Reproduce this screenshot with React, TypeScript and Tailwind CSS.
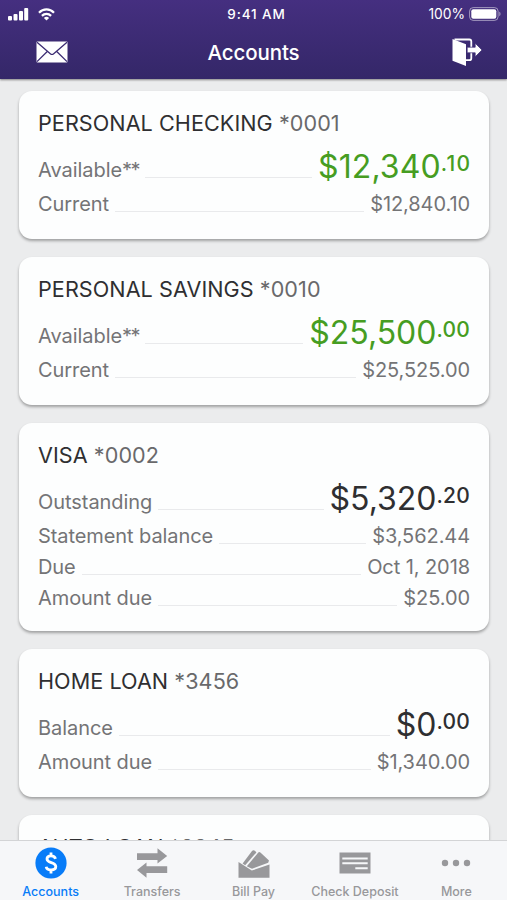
import type { ReactNode } from "react";

interface Row {
  label: string;
  value: string;
}

interface Account {
  name: string;
  mask: string;
  label: string;
  footnote?: string;
  dollars: string;
  cents: string;
  positive?: boolean;
  rows: Row[];
}

const accounts: Account[] = [
  {
    name: "PERSONAL CHECKING",
    mask: "*0001",
    label: "Available",
    footnote: "**",
    dollars: "$12,340",
    cents: ".10",
    positive: true,
    rows: [{ label: "Current", value: "$12,840.10" }],
  },
  {
    name: "PERSONAL SAVINGS",
    mask: "*0010",
    label: "Available",
    footnote: "**",
    dollars: "$25,500",
    cents: ".00",
    positive: true,
    rows: [{ label: "Current", value: "$25,525.00" }],
  },
  {
    name: "VISA",
    mask: "*0002",
    label: "Outstanding",
    dollars: "$5,320",
    cents: ".20",
    rows: [
      { label: "Statement balance", value: "$3,562.44" },
      { label: "Due", value: "Oct 1, 2018" },
      { label: "Amount due", value: "$25.00" },
    ],
  },
  {
    name: "HOME LOAN",
    mask: "*3456",
    label: "Balance",
    dollars: "$0",
    cents: ".00",
    rows: [{ label: "Amount due", value: "$1,340.00" }],
  },
  {
    name: "AUTO LOAN",
    mask: "*2345",
    label: "Balance",
    dollars: "$0",
    cents: ".00",
    rows: [{ label: "Amount due", value: "$0.00" }],
  },
];

function StatusBar() {
  return (
    <div className="h-[28px] pl-[8px] pr-[6px] grid grid-cols-3 items-center text-[13.8px]">
      <div className="flex items-center gap-[9px]">
        <svg width="21" height="14" viewBox="0 0 21 14" fill="white">
          <rect x="0" y="9" width="4" height="4.5" rx="1" />
          <rect x="5.5" y="7" width="4" height="6.5" rx="1" />
          <rect x="11" y="4" width="4" height="9.5" rx="1" />
          <rect x="16.2" y="1" width="4" height="12.5" rx="1" />
        </svg>
        <svg width="17" height="13" viewBox="0 0 17 13" fill="none" stroke="white" strokeWidth="2.2">
          <path d="M1 4.7C5.2 .3 11.8 .3 16 4.7" />
          <path d="M3.9 7.9C6.6 5.2 10.4 5.2 13.1 7.9" />
          <path d="M5.9 9.9C7.4 8.4 9.6 8.4 11.1 9.9L8.5 12.6Z" fill="white" stroke="none" />
        </svg>
      </div>
      <div className="text-center font-medium tracking-[0.9px] text-[13.5px] pl-[4px]">9:41 AM</div>
      <div className="flex items-center justify-end gap-[4px]">
        <span>100%</span>
        <svg width="32" height="14" viewBox="0 0 32 14" fill="none">
          <rect x="0.6" y="0.6" width="28.5" height="12.8" rx="3.6" stroke="white" strokeOpacity="0.5" />
          <rect x="2.3" y="2.2" width="25" height="9.6" rx="2" fill="white" />
          <path d="M30.4 4.8C31.8 5.3 31.8 8.7 30.4 9.2Z" fill="white" fillOpacity="0.6" />
        </svg>
      </div>
    </div>
  );
}

function Header() {
  return (
    <header className="relative z-10 shrink-0 h-[79px] text-white bg-linear-to-b from-[#452f80] to-[#342768] shadow-[0_1px_2px_rgba(0,0,0,0.45)]">
      <StatusBar />
      <div className="h-[48px] pl-[36px] pr-[25px] grid grid-cols-[1fr_auto_1fr] items-center">
        <svg width="32" height="22" viewBox="0 0 32 22">
          <rect x="0.5" y="0.5" width="31" height="21" rx="1" fill="white" />
          <path
            d="M1 1.3L14.6 12.9Q16 14 17.4 12.9L31 1.3M1 20.6L11.5 10.3M31 20.6L20.5 10.3"
            fill="none"
            stroke="#3b2b72"
            strokeWidth="1.3"
          />
        </svg>
        <h1 className="text-[20.5px] font-medium tracking-[-0.1px] pt-[2px] pr-[11px]">Accounts</h1>
        <svg className="justify-self-end" width="30" height="29" viewBox="0 0 30 29">
          <path d="M2.5 1.5H17.3Q19.3 1.5 19.3 3.5V20.2Q19.3 22.2 17.3 22.2H14" fill="none" stroke="white" strokeWidth="1.8" />
          <path d="M0.5 1L14 6.2V28L0.5 22.8Z" fill="white" />
          <path d="M15.2 9.2H23.2V5.2L30 12L23.2 18.8V14.8H15.2Z" fill="white" stroke="#3b2b72" strokeWidth="0.7" />
        </svg>
      </div>
    </header>
  );
}

function AccountCard({ account }: { account: Account }) {
  // the 1 glyph is narrow, open the tracking a little where it is used
  const dollarTracking = account.dollars.startsWith("$1") ? "tracking-[0.1px]" : "";
  const centTracking = account.cents.startsWith(".1") ? "tracking-[1.2px] -mr-[1.2px]" : "tracking-[0.2px]";

  return (
    <section
      className={`shrink-0 bg-[#fdfefe] rounded-[13px] px-[19px] pt-[18px] shadow-[0_2px_3px_rgba(0,0,0,0.32)] ${
        account.rows.length > 1 ? "pb-[17px]" : "pb-[19px]"
      }`}
    >
      <h2 className="text-[21.6px] leading-[28px] tracking-[0.06px] text-[#2f2f31]">
        {account.name} <span className="text-[#69696b]">{account.mask}</span>
      </h2>
      <div className="mt-[11px] h-[41px] flex items-end">
        <span className="text-[20px] leading-[37px] tracking-[-0.05px] text-[#747476]">
          {account.label}
          {account.footnote && <span className="tracking-[-1.6px]">{account.footnote}</span>}
        </span>
        <div className="flex-1 mx-[6px] mb-[11px] h-px bg-[#e9eaec]" />
        <span className={`flex items-start leading-[44px] ${account.positive ? "text-[#469d22]" : "text-[#2f2f31]"}`}>
          <span className={`text-[32px] ${dollarTracking}`}>{account.dollars}</span>
          <span className={`text-[21px] leading-[37px] font-medium ${centTracking}`}>{account.cents}</span>
        </span>
      </div>
      {account.rows.map((row) => (
        <div key={row.label} className="h-[31px] flex items-end text-[20px] leading-[31px] tracking-[-0.08px] text-[#747476]">
          <span>{row.label}</span>
          <div className="flex-1 mx-[6px] mb-[8px] h-px bg-[#e9eaec]" />
          <span>{row.value}</span>
        </div>
      ))}
    </section>
  );
}

function Tab({ label, active, children }: { label: string; active?: boolean; children: ReactNode }) {
  return (
    <button className={`flex-1 basis-0 min-w-0 flex flex-col items-center ${active ? "text-[#087cf8]" : "text-[#98989b]"}`}>
      <span className="h-[44px] flex items-center justify-center">{children}</span>
      <span className="text-[12.5px] leading-[14px] font-medium whitespace-nowrap">{label}</span>
    </button>
  );
}

function TabBar() {
  return (
    <nav className="relative z-10 shrink-0 h-[60px] flex bg-[#f6f7f9] border-t border-[#d3d4d6]">
      <Tab label="Accounts" active>
        <svg width="32" height="32" viewBox="0 0 32 32">
          <circle cx="16" cy="16" r="15.6" fill="currentColor" />
          <path
            d="M20.5 11.8C19.5 7.8 12 7.8 12 12C12 16.6 20.8 14.6 20.8 19.6C20.8 24 12 24.2 11.2 19.8M16 5.6V9M16 23V26.4"
            fill="none"
            stroke="white"
            strokeWidth="2.8"
          />
        </svg>
      </Tab>
      <Tab label="Transfers">
        <svg width="32" height="30" viewBox="0 0 32 30" fill="currentColor">
          <path d="M1 5.3H21.5V.3L31.2 8L21.5 15.5V12H1Z" />
          <path d="M31.2 18.3H10.5V14.5L1 22L10.5 29.7V25H31.2Z" />
        </svg>
      </Tab>
      <Tab label="Bill Pay">
        <svg width="32" height="30" viewBox="0 0 32 30" fill="currentColor">
          <path d="M.5 14L13.8 22.6L31.5 16.4V29.7H.5Z" />
          <path d="M4.6 15.4L14 2.9Q15.4 1.6 17.2 3L18.4 4.4L7.2 17.3Z" />
          <path d="M8.8 18.3L20.3 4.6Q21.3 3.6 22.4 4.6L31 12.4L30.2 14.8L14 20.8Z" />
        </svg>
      </Tab>
      <Tab label="Check Deposit">
        <svg width="32" height="22" viewBox="0 0 32 22">
          <rect x="0.5" y="0.5" width="31" height="21" fill="currentColor" />
          <path d="M3.3 6.5H28.7M3.3 11.3H28.7M16.3 16.2H28.7" stroke="#f6f7f9" strokeWidth="1.9" />
        </svg>
      </Tab>
      <Tab label="More">
        <svg width="30" height="8" viewBox="0 0 30 8" fill="currentColor">
          <circle cx="4" cy="4" r="3.2" />
          <circle cx="15" cy="4" r="3.2" />
          <circle cx="26" cy="4" r="3.2" />
        </svg>
      </Tab>
    </nav>
  );
}

export default function App() {
  return (
    <div className="w-full h-screen overflow-hidden flex flex-col bg-[#ebeced] font-[Inter,sans-serif]">
      <Header />
      <main className="flex-1 min-h-0 overflow-hidden pl-[19px] pr-[18px] pt-[12px] flex flex-col gap-[18px]">
        {accounts.map((account) => (
          <AccountCard key={account.name} account={account} />
        ))}
      </main>
      <TabBar />
    </div>
  );
}
